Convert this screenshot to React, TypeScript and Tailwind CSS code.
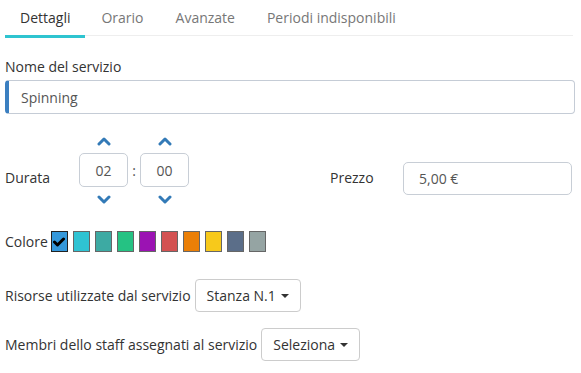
import React from 'react';

const tabs = ['Dettagli', 'Orario', 'Avanzate', 'Periodi indisponibili'];

const swatches = [
  '#3498db',
  '#2fc3d3',
  '#3daaa3',
  '#25c283',
  '#9b13b3',
  '#d35252',
  '#ea7f07',
  '#f7c91b',
  '#5b6e89',
  '#95a4a3',
];

function Chevron({ up }: { up?: boolean }) {
  return (
    <svg width="14" height="10" viewBox="0 0 14 10" className="block">
      <polyline
        points={up ? '2,8 7,3 12,8' : '2,2 7,7 12,2'}
        fill="none"
        stroke="#337ab7"
        strokeWidth="3"
        strokeLinecap="round"
        strokeLinejoin="round"
      />
    </svg>
  );
}

function TimeBox({ value }: { value: string }) {
  return (
    <div className="flex flex-col items-center w-[49px]">
      <div className="h-[20px] flex items-center justify-center">
        <Chevron up />
      </div>
      <div className="mt-[2px] h-[34px] w-[49px] border border-[#c8ced6] rounded-[5px] flex items-center justify-center text-[#555]">
        {value}
      </div>
      <div className="mt-[3px] h-[20px] flex items-center justify-center">
        <Chevron />
      </div>
    </div>
  );
}

function Caret() {
  return (
    <span className="inline-block ml-[5px] w-0 h-0 border-l-[4px] border-r-[4px] border-t-[4px] border-l-transparent border-r-transparent border-t-[#333] align-middle" />
  );
}

export default function App() {
  return (
    <div className="w-[581px] h-[373px] bg-white text-[14px] text-[#333] font-['Open_Sans',sans-serif]">
      <div className="mx-[5px] mr-[8px] flex border-b border-[#eeeeee] h-[36px]">
        {tabs.map((t, i) => (
          <div
            key={t}
            className={
              'relative h-[35px] flex items-center ' +
              (i === 0 ? 'px-[15px] text-[#333]' : 'px-[16px] text-[#777]')
            }
          >
            {t}
            {i === 0 && (
              <span className="absolute left-0 right-0 top-[35px] h-[3px] bg-[#2ec4d0]" />
            )}
          </div>
        ))}
      </div>

      <div className="px-[5px]">
        <div className="mt-[21px] h-[20px] leading-[20px]">Nome del servizio</div>
        <div className="mt-[3px] mr-[1px] h-[34px] border border-[#c5ccd6] border-l-[4px] border-l-[#3b7fc0] rounded-[4px] flex items-center pl-[12px] text-[#555]">
          Spinning
        </div>

        <div className="mt-[17px] flex items-start">
          <div className="w-[74px] mt-[37px] h-[20px] leading-[20px]">Durata</div>
          <TimeBox value="02" />
          <div className="w-[12px] mt-[22px] h-[34px] flex items-center justify-center text-[#555]">:</div>
          <TimeBox value="00" />
          <div className="ml-[141px] w-[73px] mt-[37px] h-[20px] leading-[20px]">Prezzo</div>
          <div className="mt-[31px] w-[169px] h-[33px] border border-[#c8ced6] rounded-[5px] flex items-center pl-[15px] text-[#555]">
            5,00 €
          </div>
        </div>

        <div className="mt-[21px] flex items-center">
          <span className="mr-[3px]">Colore</span>
          <div className="flex gap-[5px]">
            {swatches.map((c, i) => (
              <div
                key={c}
                className={
                  'w-[17px] h-[21px] border flex items-center justify-center ' +
                  (i === 0 ? 'border-[#222]' : 'border-[#666]')
                }
                style={{ backgroundColor: c }}
              >
                {i === 0 && (
                  <svg width="12" height="10" viewBox="0 0 12 10">
                    <polyline
                      points="1.5,5 4.5,8 10.5,2"
                      fill="none"
                      stroke="#000"
                      strokeWidth="3"
                      strokeLinecap="round"
                      strokeLinejoin="round"
                    />
                  </svg>
                )}
              </div>
            ))}
          </div>
        </div>

        <div className="mt-[27px] flex items-center">
          <span className="mr-[4px]">Risorse utilizzate dal servizio</span>
          <div className="h-[33px] px-[11px] border border-[#ccc] rounded-[4px] flex items-center">
            Stanza N.1
            <Caret />
          </div>
        </div>

        <div className="mt-[16px] flex items-center">
          <span className="mr-[4px]">Membri dello staff assegnati al servizio</span>
          <div className="h-[33px] px-[11px] border border-[#ccc] rounded-[4px] flex items-center">
            Seleziona
            <Caret />
          </div>
        </div>
      </div>
    </div>
  );
}
